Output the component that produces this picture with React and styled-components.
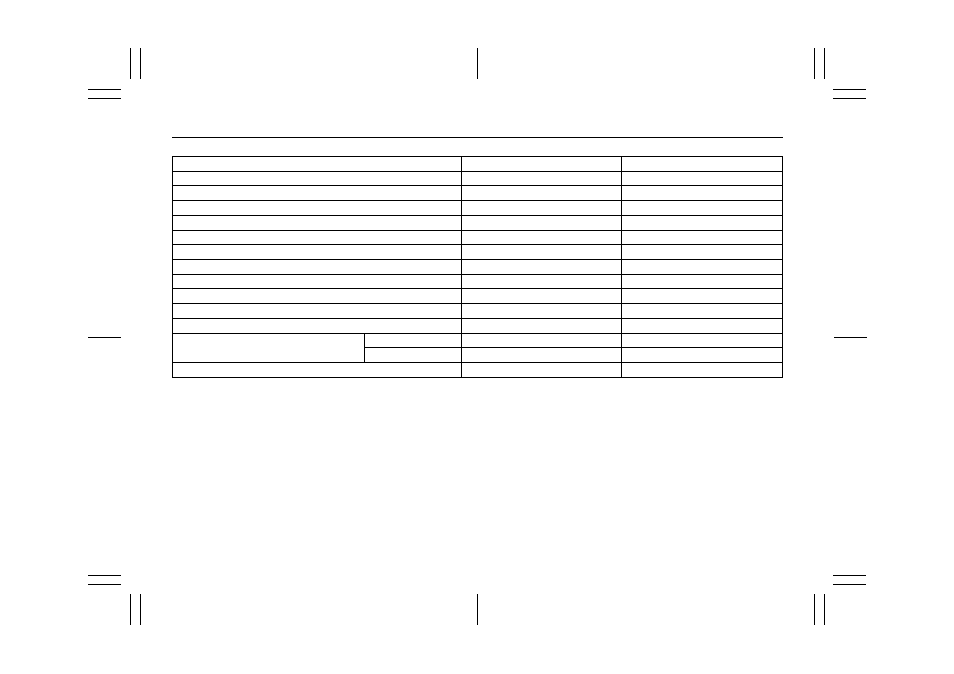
import React from 'react'
import styled, { createGlobalStyle } from 'styled-components';

const GlobalStyle = createGlobalStyle`
 html, body {
  margin: 0;
  padding: 0;
  background: #fff;
  font-family: "Liberation Sans", Arial, sans-serif;
 }
`;

const Page = styled.div`
 width: 954px;
 height: 674px;
 display: flex;
 flex-direction: column;
 background: #fff;
`;

const Band = styled.div`
 display: flex;
 justify-content: space-between;
 align-items: ${({ $bottom }) => ($bottom ? 'flex-end' : 'flex-start')};
 padding: 0 88px;
 margin-top: ${({ $bottom }) => ($bottom ? '0' : '48px')};
 height: ${({ $bottom }) => ($bottom ? '50px' : '52px')};
`;

const Corner = styled.div`
 width: 53px;
 height: 100%;
 display: flex;
 flex-direction: ${({ $bottom }) => ($bottom ? 'column-reverse' : 'column')};
 align-items: ${({ $right }) => ($right ? 'flex-start' : 'flex-end')};
 justify-content: space-between;
`;

const VPair = styled.div`
 display: flex;
 gap: 9px;
 height: 31px;
 padding: ${({ $right }) => ($right ? '0 0 0 1px' : '0 0 0 0')};
`;

const HPair = styled.div`
 display: flex;
 flex-direction: column;
 gap: 8px;
 width: 33px;
 align-self: ${({ $right }) => ($right ? 'flex-end' : 'flex-start')};
 padding-bottom: ${({ $bottom }) => ($bottom ? '0' : '1px')};
`;

const VLine = styled.div`
 width: 1px;
 height: 31px;
 background: #000;
`;

const HLine = styled.div`
 height: 1px;
 width: 100%;
 background: #000;
`;

const Middle = styled.div`
 flex: 1;
 display: grid;
 grid-template-columns: 33px 1fr 33px;
 padding: 0 88px;
`;

const SideMark = styled.div`
 padding-top: 237px;
`;

const Content = styled.div`
 padding: 37px 51px 0;
`;

const Rule = styled.div`
 height: 1px;
 background: #000;
 margin-bottom: 18px;
`;

const Table = styled.table`
 border-collapse: collapse;
 table-layout: fixed;
 width: 611px;

 td {
  border: 1px solid #000;
  padding: 0;
  height: 13.73px;
  font-size: 1px;
  line-height: 0;
 }
`;

const CornerMark = ({ right, bottom }) => (
  <Corner $right={right} $bottom={bottom}>
    <VPair $right={right}>
      <VLine />
      <VLine />
    </VPair>
    <HPair $right={right} $bottom={bottom}>
      <HLine />
      <HLine />
    </HPair>
  </Corner>
);

const plainRows = Array.from({ length: 11 });

const App = () => {
  return (
    <Page>
      <GlobalStyle />
      <Band>
        <CornerMark />
        <VLine />
        <CornerMark right />
      </Band>

      <Middle>
        <SideMark><HLine /></SideMark>
        <Content>
          <Rule />
          <Table>
            <colgroup>
              <col style={{ width: 192 }} />
              <col style={{ width: 97 }} />
              <col style={{ width: 160 }} />
              <col style={{ width: 161 }} />
            </colgroup>
            <tbody>
              <tr>
                <td colSpan={2}></td>
                <td></td>
                <td></td>
              </tr>
              {plainRows.map((_, i) => (
                <tr key={i}>
                  <td colSpan={2}></td>
                  <td></td>
                  <td></td>
                </tr>
              ))}
              <tr>
                <td rowSpan={2}></td>
                <td></td>
                <td></td>
                <td></td>
              </tr>
              <tr>
                <td></td>
                <td></td>
                <td></td>
              </tr>
              <tr>
                <td colSpan={2}></td>
                <td></td>
                <td></td>
              </tr>
            </tbody>
          </Table>
        </Content>
        <SideMark><HLine /></SideMark>
      </Middle>

      <Band $bottom>
        <CornerMark bottom />
        <VLine />
        <CornerMark right bottom />
      </Band>
      <div style={{ height: 49 }} />
    </Page>
  );
};

export default App
